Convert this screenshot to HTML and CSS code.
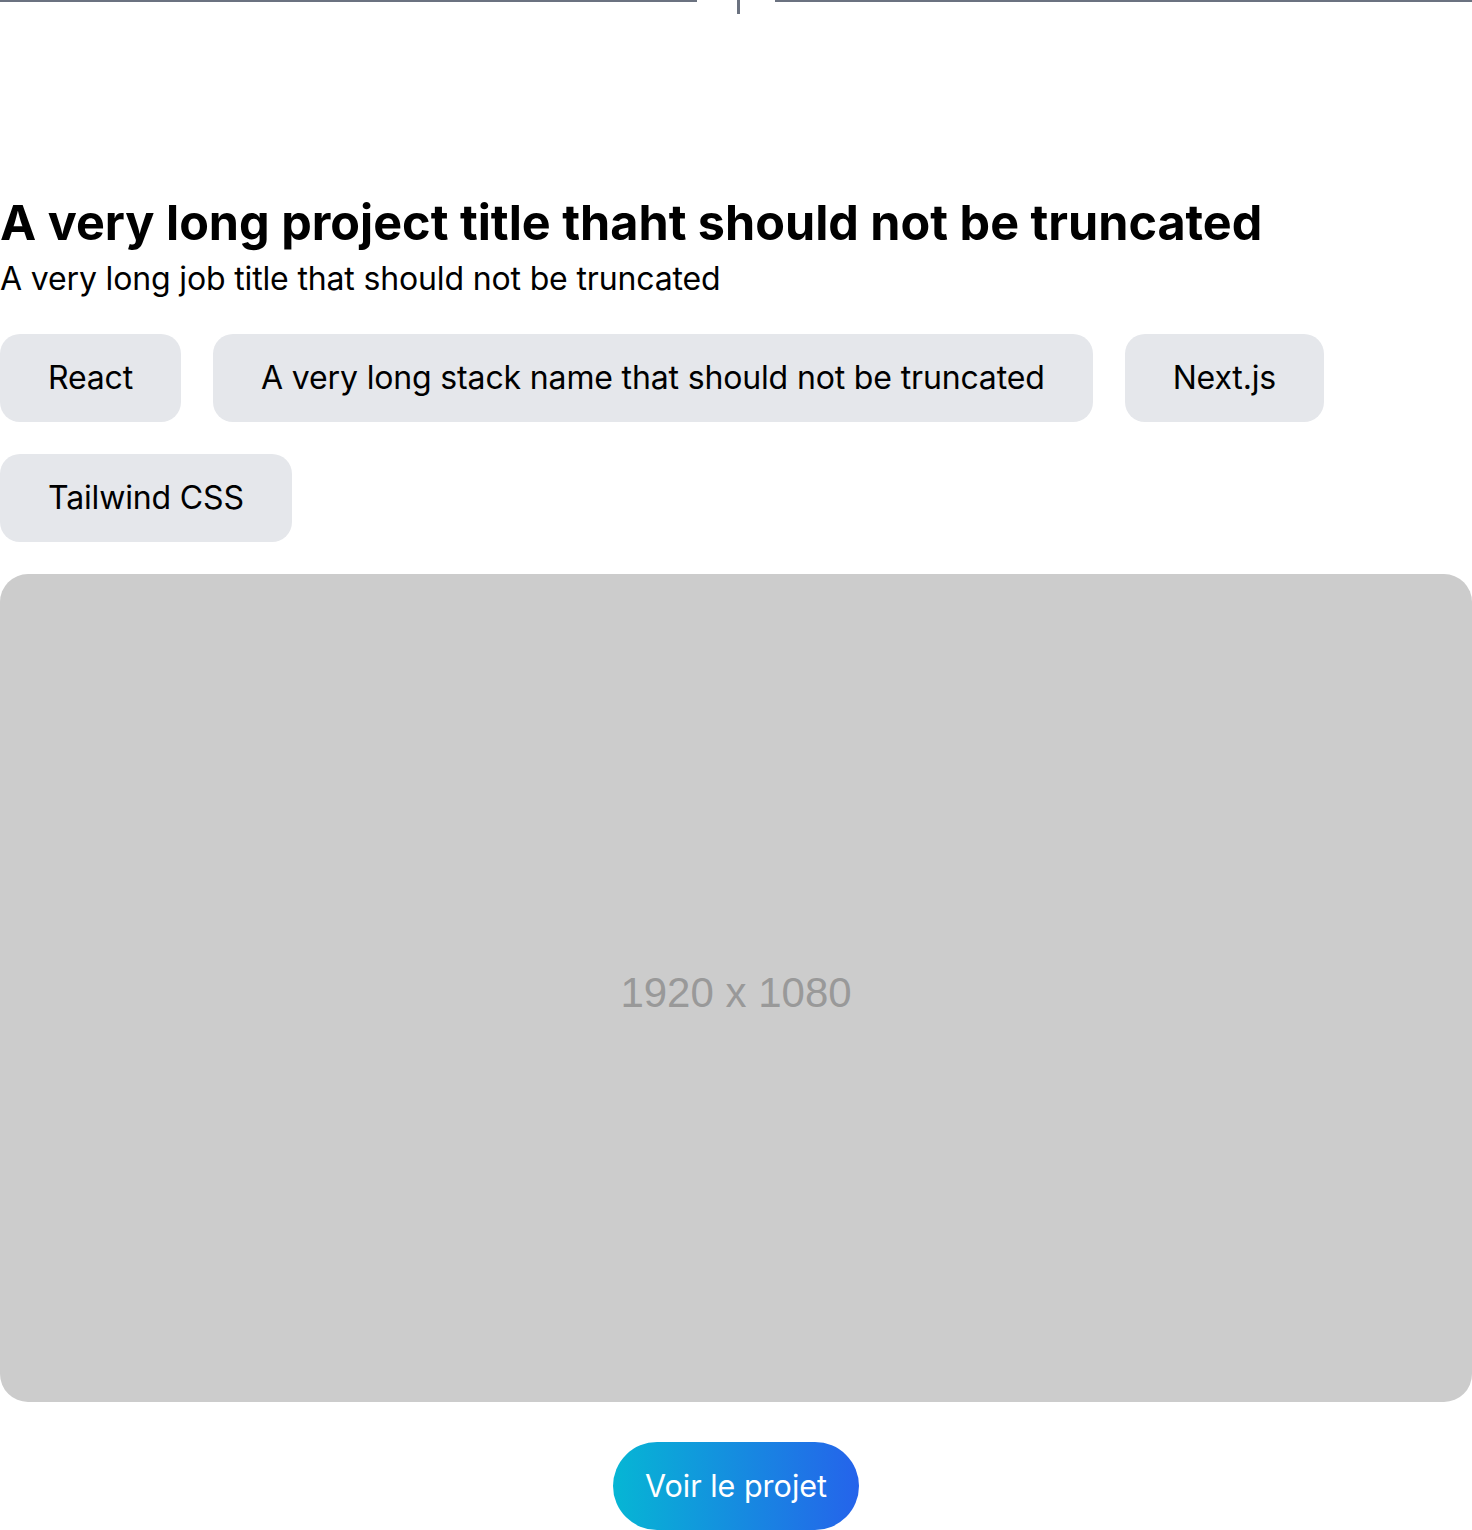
FILE: index.html
```html
<!DOCTYPE html>
<html lang="fr">
<head>
<meta charset="utf-8">
<title>Projet</title>
<link rel="stylesheet" href="styles.css">
</head>
<body>
<div class="timeline">
  <div class="timeline-line"></div>
  <div class="timeline-gap"><div class="timeline-tick"></div></div>
  <div class="timeline-line"></div>
</div>
<section class="project">
  <h1 class="project-title">A very long project title thaht should not be truncated</h1>
  <p class="project-job">A very long job title that should not be truncated</p>
  <ul class="stack">
    <li class="tag">React</li>
    <li class="tag">A very long stack name that should not be truncated</li>
    <li class="tag">Next.js</li>
    <li class="tag">Tailwind CSS</li>
  </ul>
  <div class="preview"><span class="preview-label">1920 x 1080</span></div>
  <div class="actions">
    <a class="cta" href="#">Voir le projet</a>
  </div>
</section>
</body>
</html>
```

FILE: styles.css
```css
* { box-sizing: border-box; }
html, body { margin: 0; padding: 0; background: #fff; }
body { font-family: Inter, "Noto Sans", sans-serif; color: #000; }

.timeline { display: flex; align-items: flex-start; height: 14px; }
.timeline-line { flex: 1; height: 2px; background: #6b7280; }
.timeline-gap { width: 78px; padding-left: 40px; }
.timeline-tick { width: 3px; height: 14px; background: #6b7280; }

.project { padding-top: 185px; display: flex; flex-direction: column; }
.project-title { margin: 0; font-size: 48.5px; line-height: 48.5px; font-weight: 700; }
.project-job { margin: 11px 0 0; font-size: 32px; line-height: 40px; font-weight: 400; letter-spacing: -0.15px; }

.stack { list-style: none; margin: 35px 0 0; padding: 0; display: flex; flex-wrap: wrap; gap: 32px; }
.tag { background: #e5e7eb; border-radius: 20px; padding: 24px 48px; font-size: 32px; line-height: 40px; letter-spacing: -0.15px; }

.preview { margin-top: 32px; width: 100%; aspect-ratio: 1920 / 1080; background: #cccccc; border-radius: 28px; display: flex; align-items: center; justify-content: center; }
.preview-label { font-family: "Liberation Sans", Arial, sans-serif; color: #999999; font-size: 42px; padding-top: 10px; }

.actions { display: flex; justify-content: center; margin-top: 40px; }
.cta { display: inline-block; padding: 24px 32px; border-radius: 44px; font-size: 30.5px; line-height: 40px; color: #fff; text-decoration: none; background: linear-gradient(90deg, #06b6d4, #2563eb); }
```
